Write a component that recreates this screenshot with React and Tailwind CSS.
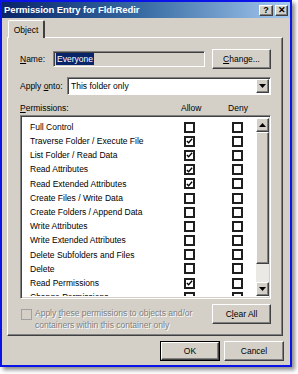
import React from "react";

const raised =
  "border border-t-white border-l-white border-r-[#404040] border-b-[#404040] shadow-[inset_-1px_-1px_0_#808080] bg-[#d4d0c8]";
const sunken =
  "border border-t-[#808080] border-l-[#808080] border-r-white border-b-white shadow-[inset_1px_1px_0_#404040]";

const perms = [
  ["Full Control", false],
  ["Traverse Folder / Execute File", true],
  ["List Folder / Read Data", true],
  ["Read Attributes", true],
  ["Read Extended Attributes", true],
  ["Create Files / Write Data", false],
  ["Create Folders / Append Data", false],
  ["Write Attributes", false],
  ["Write Extended Attributes", false],
  ["Delete Subfolders and Files", false],
  ["Delete", false],
  ["Read Permissions", true],
  ["Change Permissions", false],
];

const Arrow = ({ up }) => (
  <svg width="7" height="4" viewBox="0 0 7 4">
    <polygon points={up ? "3.5,0 7,4 0,4" : "0,0 7,0 3.5,4"} fill="#000" />
  </svg>
);

const Check = ({ checked }) => (
  <div className="w-[11px] h-[11px] border-2 border-[#1e1e1e] bg-white flex items-center justify-center">
    {checked && (
      <svg width="8" height="8" viewBox="0 0 8 8">
        <polyline points="1,4 3,6 7,1.5" fill="none" stroke="#000" strokeWidth="1.6" />
      </svg>
    )}
  </div>
);

const Btn = ({ children, className = "" }) => (
  <div className={`${raised} flex items-center justify-center ${className}`}>{children}</div>
);

export default function App() {
  return (
    <div className="w-[298px] h-[374px] bg-white font-['Liberation_Sans',Arial,sans-serif] text-[8.5px] text-black leading-none">
      <div className="w-[292px] h-[367px] border-2 border-[#0a14e8] bg-[#d4d0c8] shadow-[3px_3px_4px_rgba(0,0,0,0.45)] flex flex-col">
        {/* Title bar */}
        <div className="h-[16px] flex items-center pl-[2px] pr-[2px] bg-gradient-to-r from-[#0a246a] via-[#3a6ea5] to-[#a6caf0]">
          <span className="text-white font-bold text-[9.5px] tracking-[-0.1px]">Permission Entry for FldrRedir</span>
          <div className="ml-auto flex gap-[2px]">
            <Btn className="w-[14px] h-[11px] font-bold text-[9px]">?</Btn>
            <Btn className="w-[13px] h-[11px] font-bold text-[9px]">✕</Btn>
          </div>
        </div>

        {/* Tab */}
        <div className="mt-[2px] ml-[6px] flex">
          <div className="w-[37px] h-[18px] border-t border-l border-white border-r-2 border-r-[#404040] rounded-t-[2px] flex items-center justify-center bg-[#d4d0c8] relative z-10 -mb-[1px]">
            <span className="mt-[1px]">Object</span>
          </div>
        </div>

        {/* Tab panel */}
        <div className="ml-[5px] w-[276px] h-[299px] border border-t-white border-l-white border-r-[#404040] border-b-[#404040] shadow-[inset_-1px_-1px_0_#808080] pl-[12px] pr-[11px] pt-[11px] flex flex-col">
          {/* Name */}
          <div className="flex items-center h-[20px]">
            <span className="w-[33px]">
              <span className="underline">N</span>ame:
            </span>
            <div className={`${sunken} w-[152px] h-[16px] flex items-center pl-[2px] bg-[#d4d0c8]`}>
              <span className="bg-[#0a246a] text-white px-[1px] py-[2px]">Everyone</span>
            </div>
            <Btn className="ml-auto w-[59px] h-[20px]">
              <span>
                <span className="underline">C</span>hange...
              </span>
            </Btn>
          </div>

          {/* Apply onto */}
          <div className="flex items-center mt-[8px] h-[18px]">
            <span className="w-[47px]">
              Apply <span className="underline">o</span>nto:
            </span>
            <div className={`${sunken} bg-white flex-1 h-[18px] flex items-center pl-[3px]`}>
              <span>This folder only</span>
              <Btn className="ml-auto mr-[1px] w-[13px] h-[14px]">
                <Arrow />
              </Btn>
            </div>
          </div>

          {/* Header */}
          <div className="flex items-center mt-[7px] h-[12px]">
            <span className="w-[161px]">
              <span className="underline">P</span>ermissions:
            </span>
            <span className="w-[20px] text-center">Allow</span>
            <span className="ml-[27px] w-[20px] text-center">Deny</span>
          </div>

          {/* List */}
          <div className="mt-[1px] h-[184px] border border-t-[#808080] border-l-[#808080] border-r-white border-b-white shadow-[inset_1px_1px_0_#404040,inset_-1px_-1px_0_#d4d0c8] bg-white flex p-[2px] pr-[1px]">
            <div className="flex-1 overflow-hidden pt-[2px]">
              {perms.map(([label, allow]) => (
                <div key={label} className="h-[14.2px] flex items-center">
                  <span className="w-[161px] pl-[7px] whitespace-nowrap">{label}</span>
                  <Check checked={allow} />
                  <div className="ml-[37px]">
                    <Check checked={false} />
                  </div>
                </div>
              ))}
            </div>
            <div className="w-[13px] flex flex-col">
              <Btn className="h-[14px] w-[13px]">
                <Arrow up />
              </Btn>
              <div className={`${raised} h-[132px]`} />
              <div className="flex-1 bg-[#ebe9e6]" />
              <Btn className="h-[14px] w-[13px]">
                <Arrow />
              </Btn>
            </div>
          </div>

          {/* Bottom row */}
          <div className="flex items-start mt-[5px]">
            <div className="mt-[5px] ml-[1px] w-[11px] h-[11px] border border-[#a0a0a0] bg-[#d4d0c8] shrink-0" />
            <div className="ml-[3px] mt-[3px] text-[#808080] leading-[12px] [text-shadow:1px_1px_0_#fff]">
              <div>
                Apply <span className="underline">t</span>hese permissions to objects and/or
              </div>
              <div>containers within this container only</div>
            </div>
            <Btn className="ml-auto w-[59px] h-[20px]">
              <span>
                C<span className="underline">l</span>ear All
              </span>
            </Btn>
          </div>
        </div>

        {/* Dialog buttons */}
        <div className="flex mt-[5px] pl-[158px] gap-[4px]">
          <div className="border border-black">
            <Btn className="w-[58px] h-[18px]">OK</Btn>
          </div>
          <Btn className="w-[60px] h-[20px]">Cancel</Btn>
        </div>
      </div>
    </div>
  );
}
